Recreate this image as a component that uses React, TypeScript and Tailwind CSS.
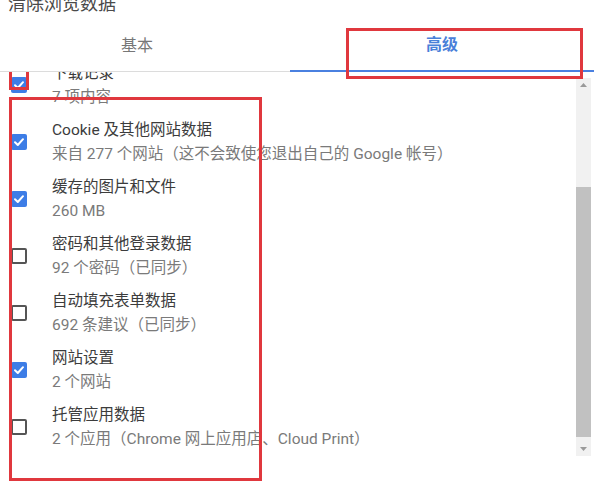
import React from "react";

type Item = { title: string; sub: string; checked: boolean };

const items: Item[] = [
  { title: "下载记录", sub: "7 项内容", checked: true },
  { title: "Cookie 及其他网站数据", sub: "来自 277 个网站（这不会致使您退出自己的 Google 帐号）", checked: true },
  { title: "缓存的图片和文件", sub: "260 MB", checked: true },
  { title: "密码和其他登录数据", sub: "92 个密码（已同步）", checked: false },
  { title: "自动填充表单数据", sub: "692 条建议（已同步）", checked: false },
  { title: "网站设置", sub: "2 个网站", checked: true },
  { title: "托管应用数据", sub: "2 个应用（Chrome 网上应用店、Cloud Print）", checked: false },
];

function Checkbox({ checked }: { checked: boolean }) {
  if (checked) {
    return (
      <div className="w-[16px] h-[16px] shrink-0 rounded-[2px] bg-[#3d7de6] flex items-center justify-center">
        <svg width="12" height="12" viewBox="0 0 12 12">
          <path d="M2 6.3 L4.8 9 L10 3.2" fill="none" stroke="white" strokeWidth="2" strokeLinecap="round" strokeLinejoin="round" />
        </svg>
      </div>
    );
  }
  return <div className="w-[16px] h-[16px] shrink-0 rounded-[2px] border-2 border-[#555]" />;
}

export default function App() {
  return (
    <div
      className="relative w-[594px] h-[483px] overflow-hidden bg-white flex flex-col"
      style={{ fontFamily: "Roboto, 'Noto Sans CJK SC', sans-serif" }}
    >
      {/* dialog title (clipped) */}
      <div className="h-[20px] overflow-hidden pl-[8px] shrink-0">
        <div className="-mt-[5px] text-[18px] leading-[18px] text-[#4a4a4a]">清除浏览数据</div>
      </div>

      {/* tabs */}
      <div className="h-[52px] flex shrink-0">
        <div className="w-[290px] flex items-center justify-center pr-[16px] border-b border-[#dcdcdc] text-[16px] text-[#777]">
          基本
        </div>
        <div className="flex-1 flex items-center justify-center border-b-2 border-[#4a80e0] text-[16px] font-bold text-[#4a80d9]">
          高级
        </div>
      </div>

      {/* content */}
      <div className="flex-1 flex min-h-0">
        <div className="flex-1 overflow-hidden">
          <div className="-mt-[16px] flex flex-col">
            {items.map((it, i) => (
              <div key={i} className="h-[57px] flex items-center pl-[11px] gap-[25px]">
                <Checkbox checked={it.checked} />
                <div className="flex flex-col pt-[1px]">
                  <div className="text-[15.5px] leading-[24px] text-[#3c3c3c] whitespace-nowrap">{it.title}</div>
                  <div className="text-[15.5px] leading-[24px] text-[#7a7a7a] whitespace-nowrap">{it.sub}</div>
                </div>
              </div>
            ))}
          </div>
        </div>

        {/* scrollbar */}
        <div className="w-[15px] mr-[3px] mt-[6px] h-[378px] bg-[#f1f1f1] flex flex-col shrink-0">
          <div className="h-[14px] flex items-center justify-center">
            <svg width="7" height="4" viewBox="0 0 7 4">
              <path d="M0 4 L3.5 0 L7 4 Z" fill="#9a9a9a" />
            </svg>
          </div>
          <div className="h-[95px]" />
          <div className="h-[250px] bg-[#c1c1c1]" />
          <div className="flex-1" />
          <div className="h-[14px] flex items-center justify-center">
            <svg width="7" height="4" viewBox="0 0 7 4">
              <path d="M0 0 L3.5 4 L7 0 Z" fill="#9a9a9a" />
            </svg>
          </div>
        </div>
      </div>

      {/* red annotation boxes */}
      <div className="absolute left-[346px] top-[28px] w-[237px] h-[51px] border-[3px] border-[#e0383e]" />
      <div className="absolute left-[9px] top-[97px] w-[253px] h-[384px] border-[3px] border-[#e0383e]" />
      <div className="absolute left-[9px] top-[72px] w-[20px] h-[18px] border-[3px] border-t-0 border-[#e0383e]" />
    </div>
  );
}
